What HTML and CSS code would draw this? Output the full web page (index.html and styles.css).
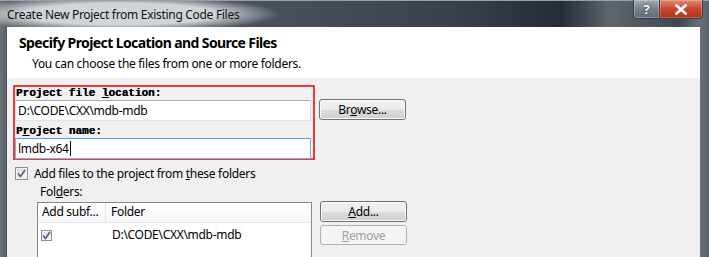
FILE: index.html
```html
<!DOCTYPE html>
<html lang="en">
<head>
    <meta charset="UTF-8">
    <title>Create New Project from Existing Code Files</title>
    <link rel="stylesheet" href="styles.css">
</head>
<body>
    <div class="window">
        <div class="titlebar">
            <span class="title">Create New Project from Existing Code Files</span>
            <div class="caption-btns">
                <span class="cap help">?</span>
                <span class="cap close">
                    <svg width="14" height="11" viewBox="0 0 14 11"><path d="M2.5 1.5 L11.5 9.5 M11.5 1.5 L2.5 9.5" stroke="#fff" stroke-width="2.8" stroke-linecap="round"/></svg>
                </span>
            </div>
        </div>
        <div class="client">
            <div class="header">
                <h1>Specify Project Location and Source Files</h1>
                <p>You can choose the files from one or more folders.</p>
            </div>
            <div class="body">
                <div class="row">
                    <div class="redbox">
                        <div class="mono-label">Project file <u>l</u>ocation:</div>
                        <div class="textbox">D:\CODE\CXX\mdb-mdb</div>
                        <div class="mono-label">P<u>r</u>oject name:</div>
                        <div class="textbox focused">lmdb-x64<span class="caret"></span></div>
                    </div>
                    <div class="btn browse">Br<u>o</u>wse...</div>
                </div>

                <div class="check-row">
                    <span class="checkbox"><svg width="9" height="9" viewBox="0 0 9 9"><path d="M1 4.5 L3.5 7.5 L8 1" stroke="#4a5f97" stroke-width="1.6" fill="none"/></svg></span>
                    <span>Add files to the project from <u>t</u>hese folders</span>
                </div>
                <div class="folders-label">Fol<u>d</u>ers:</div>

                <div class="row">
                    <div class="listbox">
                        <div class="list-head">
                            <span class="col-sub">Add subf...</span>
                            <span class="col-folder">Folder</span>
                        </div>
                        <div class="list-row">
                            <span class="col-sub"><span class="checkbox small"><svg width="9" height="9" viewBox="0 0 9 9"><path d="M1 4.5 L3.5 7.5 L8 1" stroke="#4a5f97" stroke-width="1.6" fill="none"/></svg></span></span>
                            <span class="col-folder">D:\CODE\CXX\mdb-mdb</span>
                        </div>
                    </div>
                    <div class="btn-stack">
                        <div class="btn"><u>A</u>dd...</div>
                        <div class="btn disabled"><u>R</u>emove</div>
                    </div>
                </div>
            </div>
        </div>
    </div>
</body>
</html>
```

FILE: styles.css
```css
body {
    margin: 0;
    padding: 0;
    font-family: "Noto Sans", "Open Sans", sans-serif;
    font-size: 12px;
    letter-spacing: -0.3px;
    color: #000;
    background: #2b3138;
}
.window {
    width: 709px;
    height: 257px;
    display: flex;
    flex-direction: column;
    overflow: hidden;
    background: linear-gradient(90deg, #6c7279 0px, #5b636c 6px, #4e565f 200px, #3a424c 450px, #252c35 560px, #5d656d 610px, #3f4750 680px, #6a7077 700px, #5c6269 709px);
}
.titlebar {
    height: 27px;
    flex-shrink: 0;
    display: flex;
    justify-content: space-between;
    align-items: flex-start;
    border-top: 1px solid #9aa0a6;
    box-sizing: border-box;
    background: radial-gradient(ellipse 160px 18px at 120px 13px, rgba(215, 219, 223, 0.95) 60%, rgba(215, 219, 223, 0) 100%);
}
.title {
    margin: 5px 0 0 7px;
    font-size: 12px;
    color: #111;
    line-height: 17px;
}
.caption-btns {
    display: flex;
    margin-right: 6px;
    margin-top: -1px;
}
.cap {
    height: 19px;
    display: flex;
    align-items: center;
    justify-content: center;
    border: 1px solid #3a3f45;
    border-top: none;
    box-sizing: border-box;
    box-shadow: inset 0 0 0 1px rgba(255, 255, 255, 0.25);
}
.help {
    width: 27px;
    border-radius: 0 0 0 4px;
    background: linear-gradient(#a3aab1, #788088 50%, #626a72);
    color: #fff;
    font-weight: bold;
    font-size: 13px;
    text-shadow: 0 0 2px #222;
}
.close {
    width: 43px;
    border-left: none;
    border-radius: 0 0 4px 0;
    background: linear-gradient(#e08a78, #c8452e 50%, #b0301c);
}
.client {
    flex: 1;
    min-height: 0;
    overflow: hidden;
    margin: 0 9px 0 6px;
    background: #f0f0f0;
    border-left: 1px solid #50565c;
}
.header {
    height: 51px;
    background: #fff;
    padding: 0 0 0 12px;
    box-sizing: border-box;
}
.header h1 {
    margin: 0;
    padding-top: 7px;
    font-size: 14px;
    font-weight: bold;
    line-height: 18px;
    letter-spacing: -0.6px;
}
.header p {
    margin: 3px 0 0;
    padding: 0 0 0 13px;
    line-height: 17px;
}
.body {
    padding: 7px 0 0 6px;
}
.row {
    display: flex;
    align-items: flex-start;
}
.redbox {
    width: 298px;
    height: 71px;
    border: 2px solid #f03a3a;
    padding: 0;
    display: flex;
    flex-direction: column;
}
.mono-label {
    font-family: "Liberation Mono", monospace;
    font-size: 11px;
    font-weight: bold;
    letter-spacing: 0;
    line-height: 13px;
    padding-left: 1px;
    text-shadow: 0.3px 0 0 #000;
}
.textbox {
    height: 21px;
    width: 296px;
    box-sizing: border-box;
    border: 1px solid #dde3ea;
    border-top-color: #abadb3;
    background: #fff;
    padding-left: 2px;
    line-height: 19px;
    margin-bottom: 4px;
}
.textbox.focused {
    border-color: #7eb4ea;
    border-top-color: #569de5;
    margin-bottom: 0;
}
.caret {
    display: inline-block;
    width: 1px;
    height: 15px;
    background: #000;
    vertical-align: -3px;
    margin-left: 1px;
}
.btn {
    width: 87px;
    height: 21px;
    box-sizing: border-box;
    border: 1px solid #707070;
    border-radius: 3px;
    background: linear-gradient(#f2f2f2 0%, #ebebeb 50%, #dddddd 51%, #cfcfcf 100%);
    text-align: center;
    line-height: 19px;
    box-shadow: inset 0 0 0 1px #fcfcfc;
}
.browse {
    margin: 14px 0 0 4px;
}
.btn.disabled {
    background: #f4f4f4;
    border-color: #adb2b5;
    color: #a0a0a0;
    box-shadow: none;
    height: 20px;
}
.btn-stack {
    display: flex;
    flex-direction: column;
    gap: 3px;
    margin: 1px 0 0 8px;
}
.check-row {
    display: flex;
    align-items: center;
    margin: 7px 0 0 2px;
    height: 13px;
    line-height: 13px;
}
.checkbox {
    width: 11px;
    height: 11px;
    border: 1px solid #8e8f8f;
    background: linear-gradient(135deg, #dcdcdc, #f6f6f6);
    display: inline-flex;
    align-items: center;
    justify-content: center;
    margin-right: 6px;
    box-shadow: inset 0 0 0 1px #f4f4f4;
}
.folders-label {
    margin: 3px 0 0 27px;
    line-height: 17px;
}
.listbox {
    width: 273px;
    height: 60px;
    border: 1px solid #828790;
    border-bottom: none;
    margin: 2px 0 0 24px;
    background: #fff;
}
.list-head {
    display: flex;
    height: 19px;
    line-height: 18px;
    border-bottom: 1px solid #e5e5e5;
    background: linear-gradient(#ffffff, #f7f8fa);
}
.list-head .col-sub {
    border-right: 1px solid #e5e5e5;
}
.col-sub {
    width: 68px;
    padding-left: 4px;
    box-sizing: border-box;
}
.col-folder {
    padding-left: 5px;
}
.list-row {
    display: flex;
    height: 18px;
    align-items: center;
    margin-top: 3px;
    line-height: 18px;
}
.list-row .col-sub {
    padding-left: 3px;
    display: flex;
    align-items: center;
}
.list-row .col-folder {
    padding-left: 6px;
}
.checkbox.small {
    width: 9px;
    height: 9px;
}
```
